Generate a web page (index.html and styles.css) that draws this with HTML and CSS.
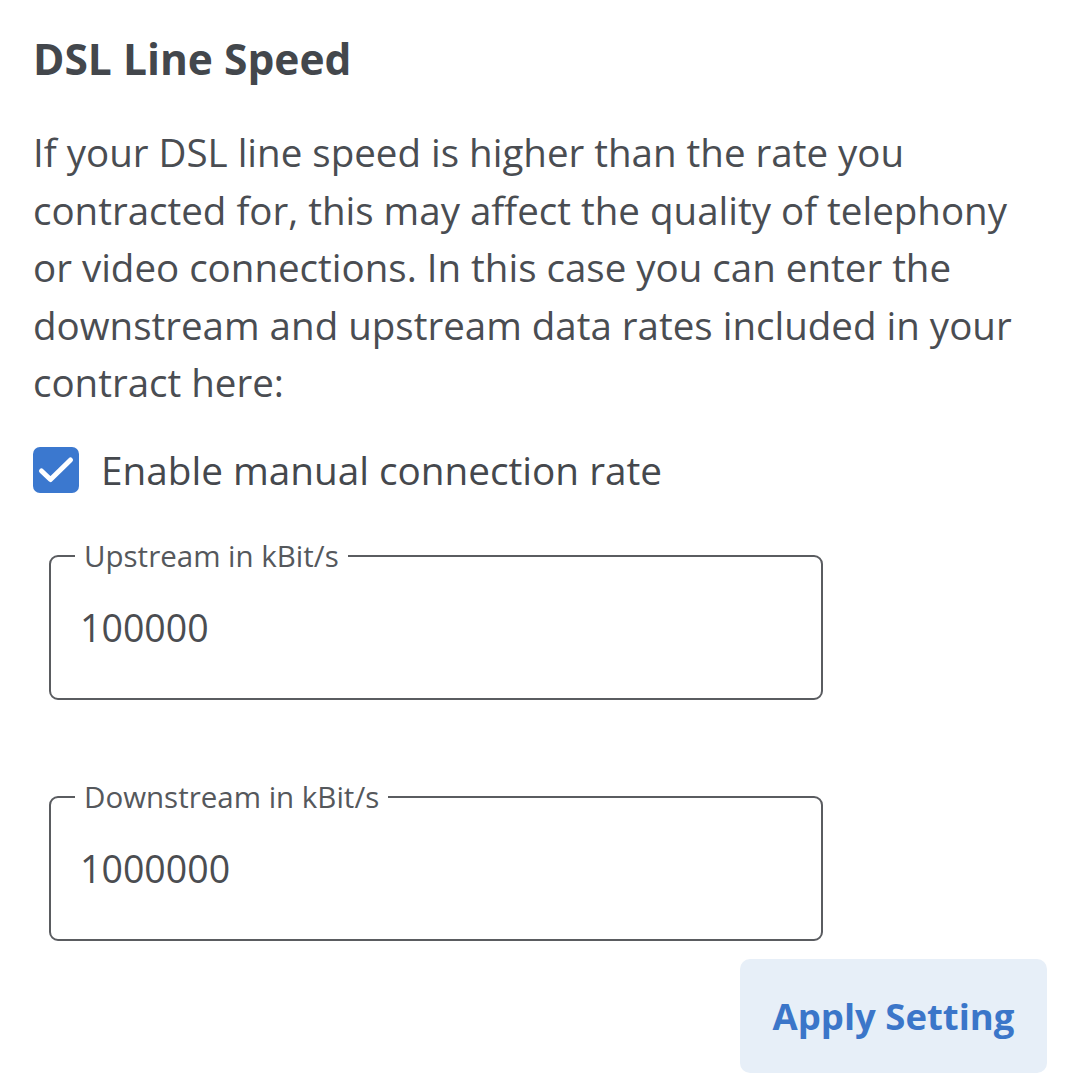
FILE: index.html
```html
<!DOCTYPE html>
<html>
<head>
<meta charset="utf-8">
<link rel="stylesheet" href="styles.css">
</head>
<body>
<div class="panel">
  <h1 class="title">DSL Line Speed</h1>
  <p class="desc">If your DSL line speed is higher than the rate you<br>contracted for, this may affect the quality of telephony<br>or video connections. In this case you can enter the<br>downstream and upstream data rates included in your<br>contract here:</p>
  <label class="check">
    <span class="box"><svg viewBox="0 0 46 46" width="46" height="46"><path d="M8.5 24 L17.5 32.5 L37.5 13" fill="none" stroke="#fff" stroke-width="5" stroke-linecap="round" stroke-linejoin="round"/></svg></span>
    <span class="check-label">Enable manual connection rate</span>
  </label>
  <fieldset class="field">
    <legend class="legend">Upstream in kBit/s</legend>
    <div class="value">100000</div>
  </fieldset>
  <fieldset class="field field-second">
    <legend class="legend">Downstream in kBit/s</legend>
    <div class="value">1000000</div>
  </fieldset>
  <div class="actions">
    <button class="apply">Apply Setting</button>
  </div>
</div>
</body>
</html>
```
FILE: styles.css
```css
html, body {
  margin: 0;
  padding: 0;
  background: #ffffff;
}
body {
  font-family: "Open Sans", "Noto Sans", sans-serif;
  color: #46494e;
}
.panel {
  width: 1014px;
  padding: 30px 0 0 33px;
  box-sizing: content-box;
}
.title {
  margin: 0;
  font-size: 42.5px;
  font-weight: 700;
  line-height: 58px;
  color: #43474c;
}
.desc {
  margin: 36px 0 0 0;
  font-size: 38.5px;
  line-height: 57.5px;
  color: #4a4d52;
}
.check {
  display: flex;
  align-items: center;
  gap: 22px;
  margin-top: 35px;
}
.box {
  width: 46px;
  height: 46px;
  border-radius: 7px;
  background: #3b78cf;
  display: block;
  flex: none;
}
.box svg { display: block; }
.check-label {
  font-size: 38.7px;
  line-height: 46px;
  color: #45484d;
}
.field {
  margin: 43px 0 0 16px;
  width: 774px;
  box-sizing: border-box;
  border: 2px solid #5a5c60;
  border-radius: 9px;
  padding: 0 30px 48px 30px;
}
.field-second {
  margin-top: 77px;
}
.legend {
  margin-left: -6px;
  padding: 0 9px;
  font-size: 29.5px;
  line-height: 40px;
  color: #55585c;
}
.value {
  margin-left: -1px;
  margin-top: 30px;
  font-size: 37.5px;
  line-height: 44px;
  color: #4b4d51;
}
.actions {
  display: flex;
  justify-content: flex-end;
  margin-top: 18px;
}
.apply {
  width: 307px;
  height: 114px;
  border: none;
  border-radius: 10px;
  background: #e7eff8;
  color: #3b76c9;
  font-family: "Open Sans", "Noto Sans", sans-serif;
  font-size: 36.5px;
  font-weight: 700;
}
```
